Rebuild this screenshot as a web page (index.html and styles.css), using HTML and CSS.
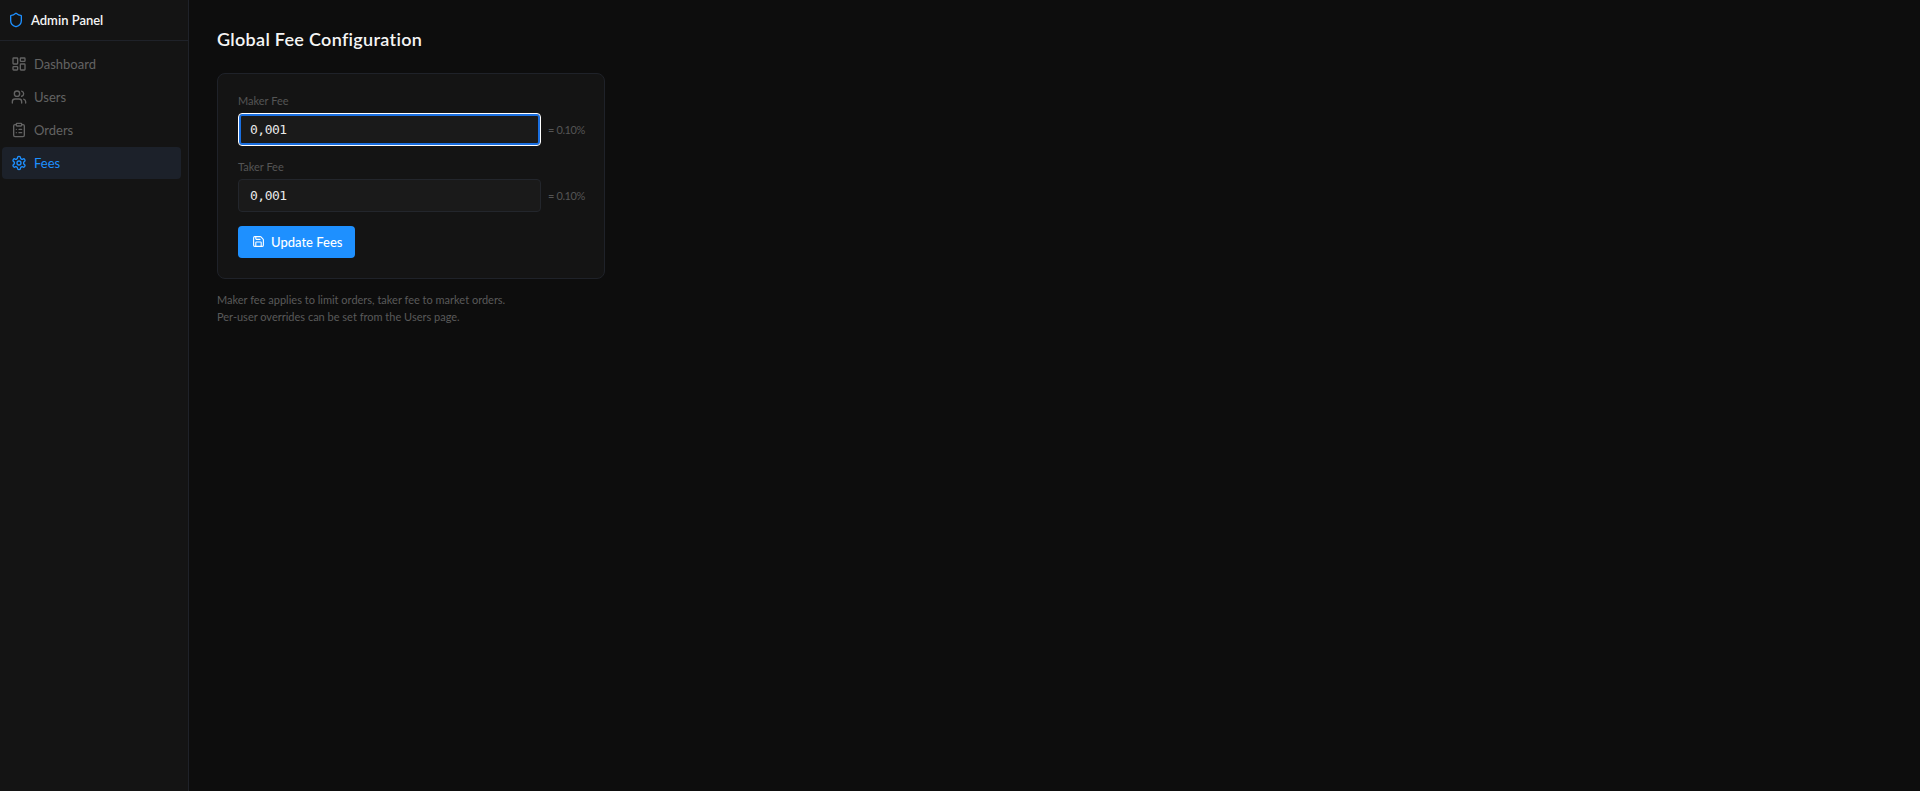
FILE: index.html
```html
<!DOCTYPE html>
<html lang="en">
<head>
<meta charset="utf-8">
<title>Admin Panel</title>
<link rel="stylesheet" href="styles.css">
</head>
<body>
<div class="app">
  <aside class="sidebar">
    <div class="brand">
      <svg class="brand-icon" viewBox="0 0 24 24"><path d="M20 13c0 5-3.5 7.5-7.66 8.95a1 1 0 0 1-.67-.01C7.5 20.5 4 18 4 13V6a1 1 0 0 1 1-1c2 0 4.5-1.2 6.24-2.72a1.17 1.17 0 0 1 1.52 0C14.51 3.81 17 5 19 5a1 1 0 0 1 1 1z"/></svg>
      <span>Admin Panel</span>
    </div>
    <nav class="nav">
      <a class="nav-item">
        <svg class="icon" viewBox="0 0 24 24"><rect width="7" height="9" x="3" y="3" rx="1"/><rect width="7" height="5" x="14" y="3" rx="1"/><rect width="7" height="9" x="14" y="12" rx="1"/><rect width="7" height="5" x="3" y="16" rx="1"/></svg>
        <span>Dashboard</span>
      </a>
      <a class="nav-item">
        <svg class="icon" viewBox="0 0 24 24"><path d="M16 21v-2a4 4 0 0 0-4-4H6a4 4 0 0 0-4 4v2"/><circle cx="9" cy="7" r="4"/><path d="M22 21v-2a4 4 0 0 0-3-3.87"/><path d="M16 3.13a4 4 0 0 1 0 7.75"/></svg>
        <span>Users</span>
      </a>
      <a class="nav-item">
        <svg class="icon" viewBox="0 0 24 24"><rect width="8" height="4" x="8" y="2" rx="1"/><path d="M16 4h2a2 2 0 0 1 2 2v14a2 2 0 0 1-2 2H6a2 2 0 0 1-2-2V6a2 2 0 0 1 2-2h2"/><path d="M12 11h4"/><path d="M12 16h4"/><path d="M8 11h.01"/><path d="M8 16h.01"/></svg>
        <span>Orders</span>
      </a>
      <a class="nav-item active">
        <svg class="icon" viewBox="0 0 24 24"><path d="M12.22 2h-.44a2 2 0 0 0-2 2v.18a2 2 0 0 1-1 1.73l-.43.25a2 2 0 0 1-2 0l-.15-.08a2 2 0 0 0-2.73.73l-.22.38a2 2 0 0 0 .73 2.73l.15.1a2 2 0 0 1 1 1.72v.51a2 2 0 0 1-1 1.74l-.15.09a2 2 0 0 0-.73 2.73l.22.38a2 2 0 0 0 2.73.73l.15-.08a2 2 0 0 1 2 0l.43.25a2 2 0 0 1 1 1.73V20a2 2 0 0 0 2 2h.44a2 2 0 0 0 2-2v-.18a2 2 0 0 1 1-1.73l.43-.25a2 2 0 0 1 2 0l.15.08a2 2 0 0 0 2.73-.73l.22-.39a2 2 0 0 0-.73-2.73l-.15-.08a2 2 0 0 1-1-1.74v-.5a2 2 0 0 1 1-1.74l.15-.09a2 2 0 0 0 .73-2.73l-.22-.38a2 2 0 0 0-2.73-.73l-.15.08a2 2 0 0 1-2 0l-.43-.25a2 2 0 0 1-1-1.73V4a2 2 0 0 0-2-2z"/><circle cx="12" cy="12" r="3"/></svg>
        <span>Fees</span>
      </a>
    </nav>
  </aside>
  <main class="main">
    <h1 class="title">Global Fee Configuration</h1>
    <section class="card">
      <div class="field">
        <label class="label">Maker Fee</label>
        <div class="row">
          <div class="input focus">0,001</div>
          <span class="pct">= 0.10%</span>
        </div>
      </div>
      <div class="field">
        <label class="label">Taker Fee</label>
        <div class="row">
          <div class="input">0,001</div>
          <span class="pct">= 0.10%</span>
        </div>
      </div>
      <button class="btn">
        <svg class="btn-icon" viewBox="0 0 24 24"><path d="M15.2 3a2 2 0 0 1 1.4.6l3.8 3.8a2 2 0 0 1 .6 1.4V19a2 2 0 0 1-2 2H5a2 2 0 0 1-2-2V5a2 2 0 0 1 2-2z"/><path d="M17 21v-7a1 1 0 0 0-1-1H8a1 1 0 0 0-1 1v7"/><path d="M7 3v4a1 1 0 0 0 1 1h7"/></svg>
        <span>Update Fees</span>
      </button>
    </section>
    <p class="note">Maker fee applies to limit orders, taker fee to market orders.<br>Per-user overrides can be set from the Users page.</p>
  </main>
</div>
</body>
</html>
```
FILE: styles.css
```css
* { box-sizing: border-box; }
html, body { margin: 0; height: 100%; }
body { background: #0d0d0d; color: #fff; font-family: "Lato", "Liberation Sans", sans-serif; }
.app { display: flex; height: 791px; }
.sidebar { width: 189px; flex: none; background: #141414; border-right: 1px solid #1f2229; }
.brand { height: 41px; display: flex; align-items: center; gap: 7px; padding: 0 8px; border-bottom: 1px solid #1f2229; font-size: 13px; font-weight: 600; color: #f5f5f5; }
.brand-icon { width: 16px; height: 16px; flex: none; fill: none; stroke: #1e90ff; stroke-width: 2; stroke-linecap: round; stroke-linejoin: round; }
.nav { padding: 7px 0 0 2px; display: flex; flex-direction: column; gap: 1px; width: 181px; }
.nav-item { height: 32px; display: flex; align-items: center; gap: 7px; padding: 0 9px; border-radius: 4px; font-size: 13px; color: #636363; }
.icon { width: 16px; height: 16px; flex: none; fill: none; stroke: currentColor; stroke-width: 2; stroke-linecap: round; stroke-linejoin: round; }
.nav-item.active { background: #1c212a; color: #1e90ff; }
.main { flex: 1; padding: 28px; }
.title { margin: 0 0 22px; font-size: 18px; line-height: 23px; font-weight: 600; letter-spacing: 0.3px; color: #f5f5f5; }
.card { width: 388px; background: #141414; border: 1px solid #1f2229; border-radius: 8px; padding: 20px; }
.field { margin-bottom: 14px; }
.label { display: block; font-size: 11px; line-height: 14px; color: #555; margin-bottom: 5px; }
.row { display: flex; align-items: center; gap: 7px; }
.input { width: 303px; height: 33px; flex: none; display: flex; align-items: center; padding: 0 11px; background: #1a1a1a; border: 1px solid #23262c; border-radius: 4px; font-family: "DejaVu Sans Mono", monospace; font-size: 13px; letter-spacing: -0.5px; color: #e8e8e8; }
.input.focus { border-color: #fff; box-shadow: inset 0 0 0 2px #1a6fe0; }
.pct { font-size: 11px; letter-spacing: -0.4px; color: #555; white-space: nowrap; }
.btn { width: 117px; height: 32px; display: flex; align-items: center; justify-content: flex-start; gap: 6px; background: #1e90ff; border: none; border-radius: 4px; color: #fff; font-family: inherit; font-size: 13px; font-weight: 500; padding: 0 0 1px 14px; }
.btn-icon { width: 13px; height: 13px; flex: none; fill: none; stroke: currentColor; stroke-width: 2; stroke-linecap: round; stroke-linejoin: round; }
.note { margin: 12px 0 0; font-size: 11px; line-height: 17px; color: #5a5a5a; }
```
